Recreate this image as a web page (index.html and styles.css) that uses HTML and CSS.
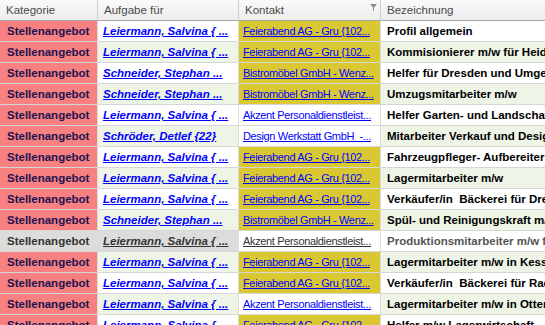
FILE: index.html
```html
<!DOCTYPE html>
<html lang="de">
<head>
<meta charset="utf-8">
<link rel="stylesheet" href="styles.css">
</head>
<body>
<div class="grid">
  <div class="hd">Kategorie</div>
  <div class="hd">Aufgabe für</div>
  <div class="hd hd-filter">Kontakt<svg class="funnel" width="7" height="7" viewBox="0 0 7 7"><path d="M0 0H7L4 3.5V7H3V3.5Z" fill="#8a8a8a"/></svg></div>
  <div class="hd">Bezeichnung</div>

  <div class="c kat">Stellenangebot</div><div class="c auf"><a>Leiermann, Salvina { ...</a></div><div class="c kon yel"><a>Feierabend AG - Gru {102...</a></div><div class="c bez">Profil allgemein</div>
  <div class="c kat">Stellenangebot</div><div class="c auf alt"><a>Leiermann, Salvina { ...</a></div><div class="c kon yel"><a>Feierabend AG - Gru {102...</a></div><div class="c bez alt">Kommisionierer m/w für Heidenau</div>
  <div class="c kat">Stellenangebot</div><div class="c auf"><a>Schneider, Stephan ...</a></div><div class="c kon yel"><a>Bistromöbel GmbH - Wenz...</a></div><div class="c bez">Helfer für Dresden und Umgebung</div>
  <div class="c kat">Stellenangebot</div><div class="c auf alt"><a>Schneider, Stephan ...</a></div><div class="c kon yel"><a>Bistromöbel GmbH - Wenz...</a></div><div class="c bez alt">Umzugsmitarbeiter m/w</div>
  <div class="c kat">Stellenangebot</div><div class="c auf"><a>Leiermann, Salvina { ...</a></div><div class="c kon"><a>Akzent Personaldienstleist...</a></div><div class="c bez">Helfer Garten- und Landschaftsbau</div>
  <div class="c kat">Stellenangebot</div><div class="c auf alt"><a>Schröder, Detlef {22}</a></div><div class="c kon"><a>Design Werkstatt GmbH&nbsp; -...</a></div><div class="c bez alt">Mitarbeiter Verkauf und Design</div>
  <div class="c kat">Stellenangebot</div><div class="c auf"><a>Leiermann, Salvina { ...</a></div><div class="c kon yel"><a>Feierabend AG - Gru {102...</a></div><div class="c bez">Fahrzeugpfleger- Aufbereiter m/w</div>
  <div class="c kat">Stellenangebot</div><div class="c auf alt"><a>Leiermann, Salvina { ...</a></div><div class="c kon yel"><a>Feierabend AG - Gru {102...</a></div><div class="c bez alt">Lagermitarbeiter m/w</div>
  <div class="c kat">Stellenangebot</div><div class="c auf"><a>Leiermann, Salvina { ...</a></div><div class="c kon yel"><a>Feierabend AG - Gru {102...</a></div><div class="c bez">Verkäufer/in&nbsp; Bäckerei für Dresden</div>
  <div class="c kat">Stellenangebot</div><div class="c auf alt"><a>Schneider, Stephan ...</a></div><div class="c kon yel"><a>Bistromöbel GmbH - Wenz...</a></div><div class="c bez alt">Spül- und Reinigungskraft m/w</div>
  <div class="c kat sel">Stellenangebot</div><div class="c auf sel"><a>Leiermann, Salvina { ...</a></div><div class="c kon dim"><a>Akzent Personaldienstleist...</a></div><div class="c bez dim">Produktionsmitarbeiter m/w für</div>
  <div class="c kat">Stellenangebot</div><div class="c auf alt"><a>Leiermann, Salvina { ...</a></div><div class="c kon yel"><a>Feierabend AG - Gru {102...</a></div><div class="c bez alt">Lagermitarbeiter m/w in Kesselsdorf</div>
  <div class="c kat">Stellenangebot</div><div class="c auf"><a>Leiermann, Salvina { ...</a></div><div class="c kon yel"><a>Feierabend AG - Gru {102...</a></div><div class="c bez">Verkäufer/in&nbsp; Bäckerei für Radebeul</div>
  <div class="c kat">Stellenangebot</div><div class="c auf alt"><a>Leiermann, Salvina { ...</a></div><div class="c kon"><a>Akzent Personaldienstleist...</a></div><div class="c bez alt">Lagermitarbeiter m/w in Ottendorf</div>
  <div class="c kat">Stellenangebot</div><div class="c auf"><a>Leiermann, Salvina { ...</a></div><div class="c kon yel"><a>Feierabend AG - Gru {102...</a></div><div class="c bez">Helfer m/w Lagerwirtschaft</div>
</div>
</body>
</html>
```

FILE: styles.css
```css
html, body {
  margin: 0;
  padding: 0;
  width: 545px;
  height: 325px;
  overflow: hidden;
  background: #ffffff;
}

.grid {
  display: grid;
  grid-template-columns: 98px 141px 142px 180px;
  grid-auto-rows: 21px;
  grid-template-rows: 21px;
  font-family: "Liberation Sans", Arial, sans-serif;
}

.hd {
  display: flex;
  align-items: center;
  padding-left: 6px;
  font-size: 11.5px;
  color: #4a4a4a;
  background: linear-gradient(#fafafa, #ededed);
  border-right: 1px solid #cfcfcf;
  border-bottom: 1px solid #a8a8a8;
  white-space: nowrap;
  overflow: hidden;
}

.hd-filter {
  position: relative;
}

.funnel {
  position: absolute;
  right: 3px;
  top: 4px;
}

.c {
  display: flex;
  align-items: center;
  padding-left: 6px;
  font-size: 11.5px;
  white-space: nowrap;
  overflow: hidden;
  border-right: 1px solid #dcdcdc;
  border-bottom: 1px solid #d6d6d6;
  background: #ffffff;
}

.c a {
  text-decoration: underline;
  color: #0000ff;
}

.kat {
  font-weight: bold;
  color: #1c1452;
  background: #f78080;
  padding-left: 7px;
}

.auf {
  font-weight: bold;
  font-style: italic;
  padding-left: 5px;
}

.kon {
  padding-left: 4px;
  font-size: 11px;
  letter-spacing: -0.35px;
}

.kon.yel {
  background: #d9c832;
}

.bez {
  font-weight: bold;
  color: #000000;
  border-right: none;
}

.alt {
  background: #eef4e6;
}

.kat.sel, .auf.sel {
  background: #dcdcdc;
  color: #333333;
}

.auf.sel a {
  color: #333333;
}

.kon.dim a {
  color: #333333;
}

.bez.dim {
  color: #555555;
}
```
